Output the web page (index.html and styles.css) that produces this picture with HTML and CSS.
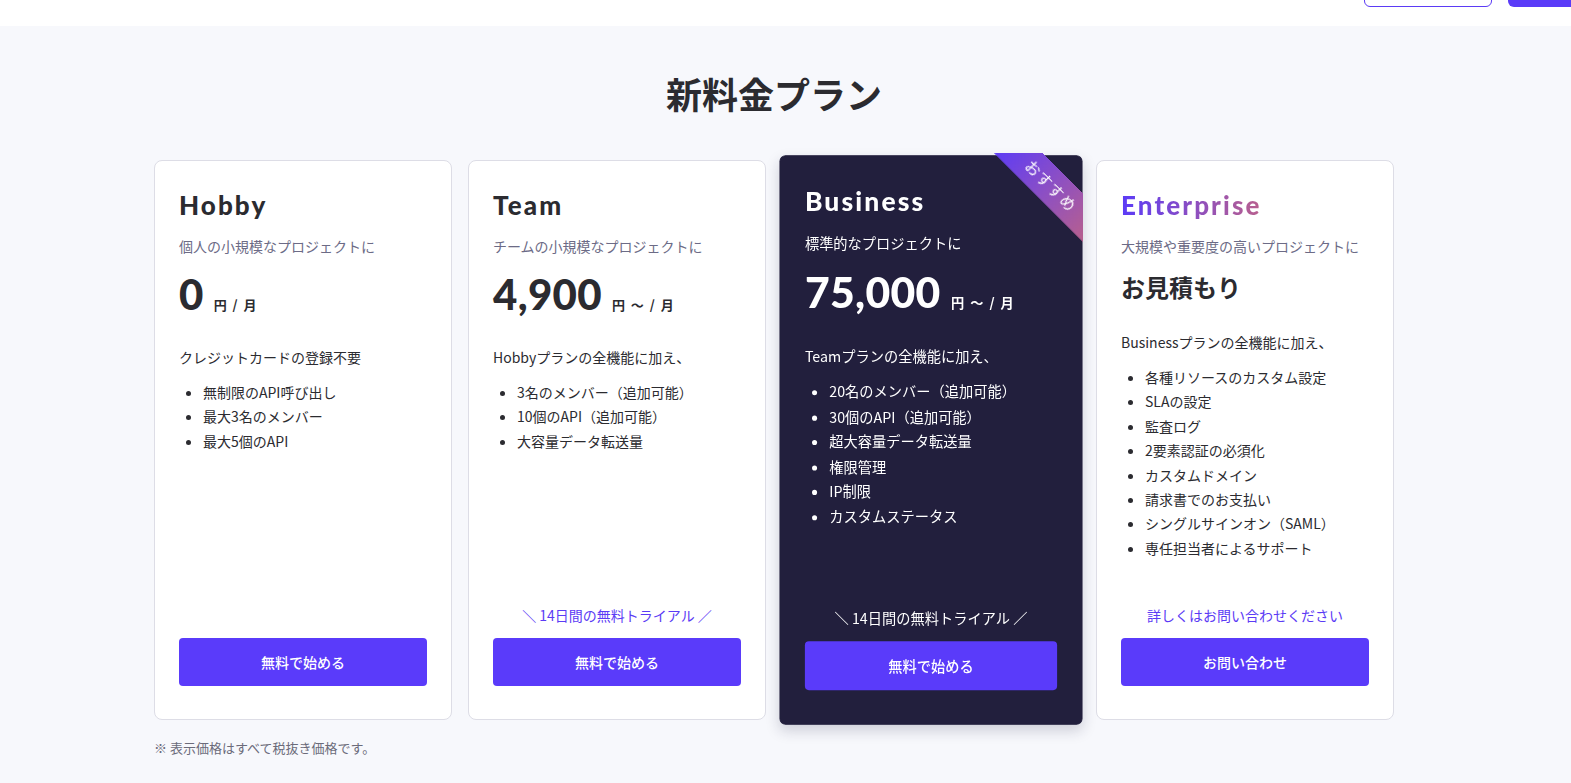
FILE: index.html
```html
<!DOCTYPE html>
<html lang="ja">
<head>
<meta charset="utf-8">
<title>新料金プラン</title>
<link rel="stylesheet" href="styles.css">
</head>
<body>
<header class="topbar">
  <a class="btn-outline" aria-label="ログイン"></a>
  <a class="btn-fill" aria-label="無料で始める"></a>
</header>
<main class="section">
  <h1 class="title">新料金プラン</h1>
  <div class="plans">
    <div class="card">
      <h2 class="plan-name">Hobby</h2>
      <p class="plan-desc">個人の小規模なプロジェクトに</p>
      <div class="price"><span class="amount">0</span><span class="unit">円 / 月</span></div>
      <p class="feat-head">クレジットカードの登録不要</p>
      <ul class="feats">
        <li>無制限のAPI呼び出し</li>
        <li>最大3名のメンバー</li>
        <li>最大5個のAPI</li>
      </ul>
      <div class="card-foot">
        <a class="cta">無料で始める</a>
      </div>
    </div>
    <div class="card">
      <h2 class="plan-name">Team</h2>
      <p class="plan-desc">チームの小規模なプロジェクトに</p>
      <div class="price"><span class="amount">4,900</span><span class="unit">円 ～ / 月</span></div>
      <p class="feat-head">Hobbyプランの全機能に加え、</p>
      <ul class="feats">
        <li>3名のメンバー（追加可能）</li>
        <li>10個のAPI（追加可能）</li>
        <li>大容量データ転送量</li>
      </ul>
      <div class="card-foot">
        <p class="note">＼ 14日間の無料トライアル ／</p>
        <a class="cta">無料で始める</a>
      </div>
    </div>
    <div class="card card-featured">
      <div class="ribbon-box"><span class="ribbon">おすすめ</span></div>
      <h2 class="plan-name">Business</h2>
      <p class="plan-desc">標準的なプロジェクトに</p>
      <div class="price"><span class="amount">75,000</span><span class="unit">円 ～ / 月</span></div>
      <p class="feat-head">Teamプランの全機能に加え、</p>
      <ul class="feats">
        <li>20名のメンバー（追加可能）</li>
        <li>30個のAPI（追加可能）</li>
        <li>超大容量データ転送量</li>
        <li>権限管理</li>
        <li>IP制限</li>
        <li>カスタムステータス</li>
      </ul>
      <div class="card-foot">
        <p class="note">＼ 14日間の無料トライアル ／</p>
        <a class="cta">無料で始める</a>
      </div>
    </div>
    <div class="card">
      <h2 class="plan-name plan-grad">Enterprise</h2>
      <p class="plan-desc">大規模や重要度の高いプロジェクトに</p>
      <div class="estimate">お見積もり</div>
      <p class="feat-head">Businessプランの全機能に加え、</p>
      <ul class="feats">
        <li>各種リソースのカスタム設定</li>
        <li>SLAの設定</li>
        <li>監査ログ</li>
        <li>2要素認証の必須化</li>
        <li>カスタムドメイン</li>
        <li>請求書でのお支払い</li>
        <li>シングルサインオン（SAML）</li>
        <li>専任担当者によるサポート</li>
      </ul>
      <div class="card-foot">
        <p class="note">詳しくはお問い合わせください</p>
        <a class="cta">お問い合わせ</a>
      </div>
    </div>
  </div>
  <p class="tax">※ 表示価格はすべて税抜き価格です。</p>
</main>
</body>
</html>
```

FILE: styles.css
```css
* { box-sizing: border-box; }
html, body { margin: 0; padding: 0; }
body {
  background: #f7f8fc;
  font-family: "Noto Sans CJK JP", "Noto Sans", sans-serif;
  color: #2b2b30;
  overflow: hidden;
}
.topbar {
  height: 26px;
  background: #fff;
  display: flex;
  justify-content: flex-end;
  align-items: flex-end;
  gap: 16px;
  padding-bottom: 19px;
  overflow: hidden;
  margin-right: -65px;
}
.btn-outline, .btn-fill {
  flex: none;
  width: 128px;
  height: 40px;
  border-radius: 6px;
  display: block;
}
.btn-outline { border: 1px solid #5b3bf5; background: #fff; }
.btn-fill { background: #5a3bf8; }

.section {
  padding: 42px 0 0 154px;
}
.title {
  width: 1240px;
  margin: 0;
  text-align: center;
  font-size: 36px;
  line-height: 50px;
  font-weight: 700;
  color: #2b2b30;
}
.plans {
  width: 1240px;
  margin-top: 42px;
  display: grid;
  grid-template-columns: repeat(4, 298px);
  gap: 16px;
}
.card {
  position: relative;
  min-height: 560px;
  background: #fff;
  border: 1px solid #dddde6;
  border-radius: 8px;
  padding: 28px 24px 33px;
  display: flex;
  flex-direction: column;
}
.card-featured {
  background: #221f3d;
  border-color: #221f3d;
  color: #fff;
  transform: scale(1.017);
  border-radius: 6px;
  box-shadow: 0 6px 14px rgba(30, 30, 60, 0.18);
  z-index: 1;
}
.ribbon-box {
  position: absolute;
  top: -3px;
  right: -1px;
  width: 92px;
  height: 92px;
  overflow: hidden;
}
.ribbon {
  position: absolute;
  left: -5px;
  top: 15px;
  width: 132px;
  height: 34px;
  transform: rotate(45deg);
  background: linear-gradient(90deg, #5b3bf7 0%, #8c4fc4 50%, #bb6189 100%);
  color: #fff;
  font-size: 15px;
  line-height: 34px;
  text-align: center;
  letter-spacing: 1px;
}
.plan-name {
  margin: 0;
  font-family: "Lato", "Noto Sans", sans-serif;
  font-weight: 900;
  font-size: 26px;
  line-height: 32px;
  letter-spacing: 2.1px;
  color: #2b2b30;
}
.card-featured .plan-name { color: #fff; }
.plan-grad {
  background: linear-gradient(90deg, #5b3bf7 0%, #b9608d 100%);
  -webkit-background-clip: text;
  background-clip: text;
  color: transparent;
  display: inline-block;
  align-self: flex-start;
}
.plan-desc {
  margin: 15px 0 0;
  font-size: 14px;
  line-height: 21px;
  color: #6c6b86;
}
.card-featured .plan-desc { color: #fff; }
.price {
  margin-top: 11px;
  display: flex;
  align-items: baseline;
  gap: 10px;
}
.amount {
  font-family: "Lato", "Noto Sans", sans-serif;
  font-weight: 900;
  font-size: 42px;
  line-height: 52px;
  letter-spacing: 0.3px;
}
.unit {
  font-size: 13px;
  font-weight: 700;
  white-space: pre;
  word-spacing: 3px;
}
.estimate {
  margin-top: 12px;
  font-size: 24px;
  line-height: 36px;
  font-weight: 700;
}
.feat-head {
  margin: 27px 0 0;
  font-size: 14px;
  line-height: 21px;
}
.feats {
  margin: 12px 0 0;
  padding-left: 24px;
  font-size: 14px;
  line-height: 24.4px;
}
.card-featured .feats { line-height: 24.6px; }
.card-foot {
  margin-top: auto;
  display: flex;
  flex-direction: column;
  align-items: stretch;
}
.note {
  margin: 0 0 12px;
  text-align: center;
  font-size: 14px;
  line-height: 21px;
  color: #5b3bf5;
}
.card-featured .note { color: #fff; }
.cta {
  height: 48px;
  border-radius: 4px;
  background: #5a3bfa;
  color: #fff;
  font-size: 14px;
  font-weight: 500;
  display: flex;
  align-items: center;
  justify-content: center;
}
.tax {
  margin: 18px 0 0;
  font-size: 13px;
  line-height: 19px;
  color: #6b6b7a;
}
```
